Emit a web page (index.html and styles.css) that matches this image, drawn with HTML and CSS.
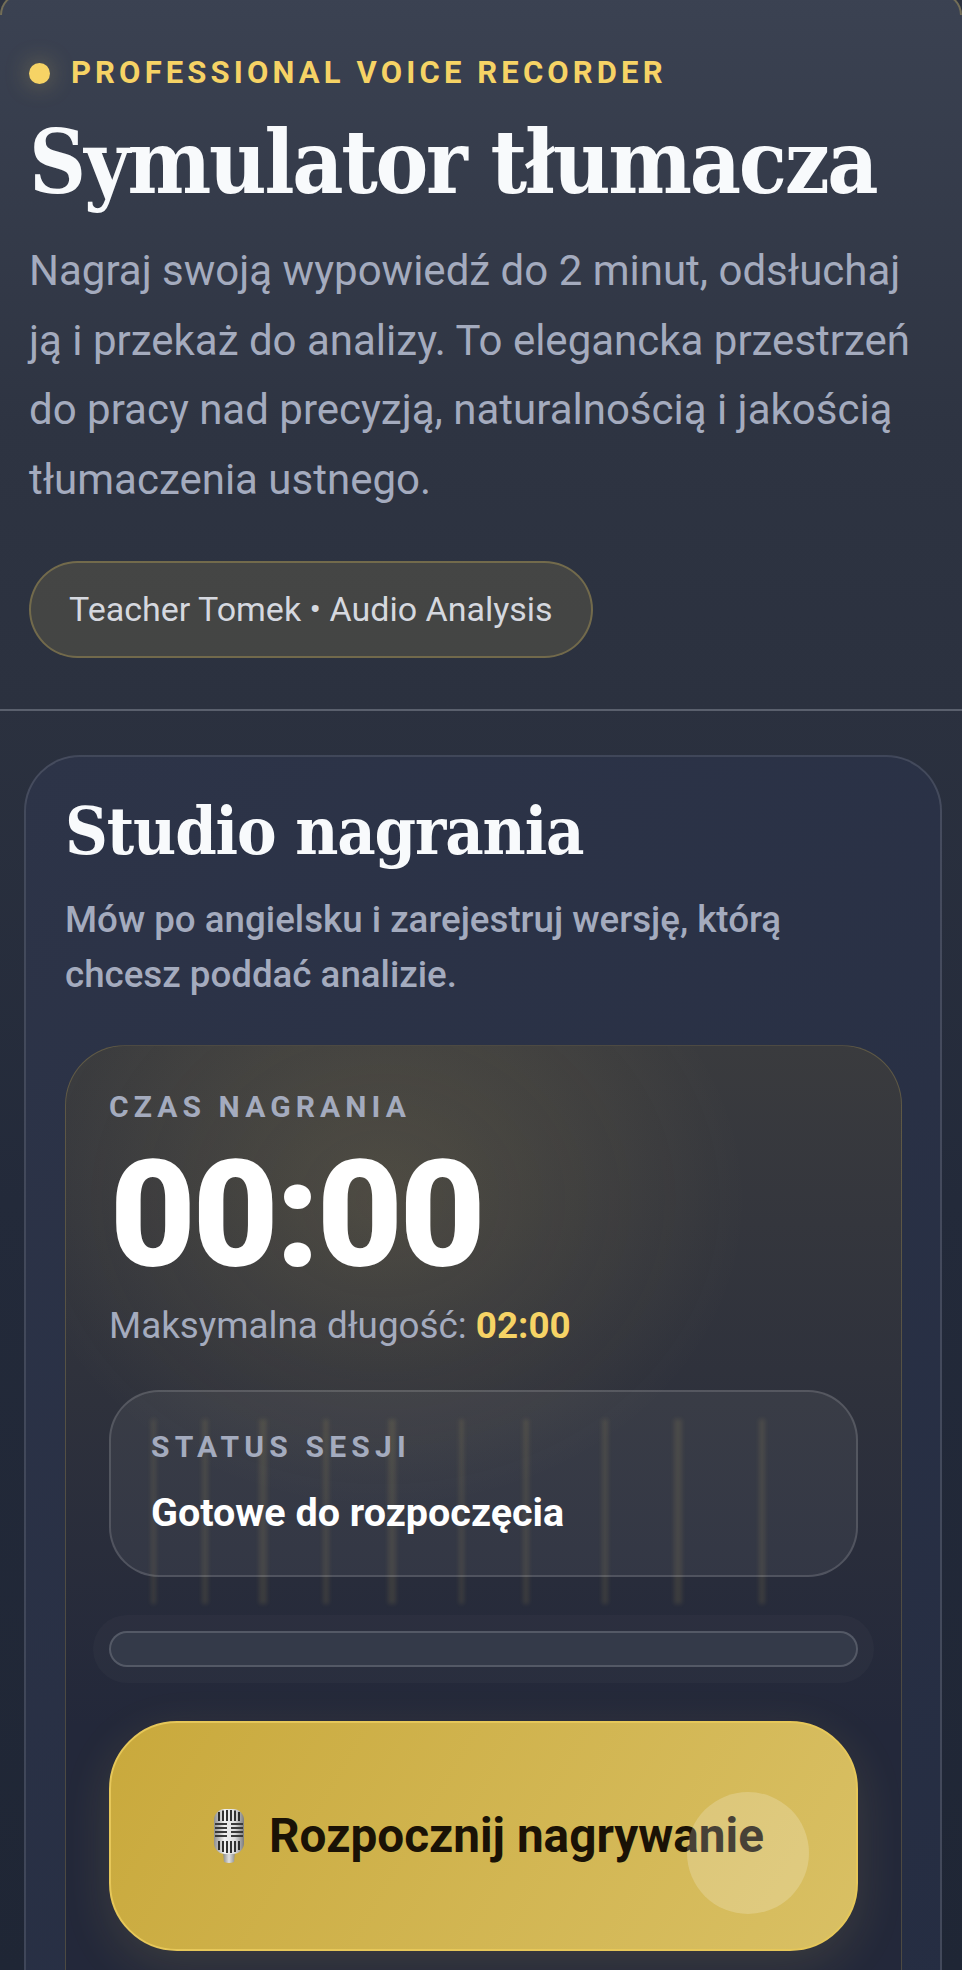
FILE: index.html
```html
<!DOCTYPE html>
<html lang="pl">
<head>
<meta charset="utf-8">
<title>Symulator tłumacza</title>
<link rel="stylesheet" href="styles.css">
</head>
<body>
<div class="shell">
  <header class="hero">
    <div class="eyebrow"><span class="dot"></span>PROFESSIONAL VOICE RECORDER</div>
    <h1>Symulator tłumacza</h1>
    <p class="lead">Nagraj swoją wypowiedź do 2 minut, odsłuchaj ją i przekaż do analizy. To elegancka przestrzeń do pracy nad precyzją, naturalnością i jakością tłumaczenia ustnego.</p>
    <div class="pill">Teacher Tomek • Audio Analysis</div>
  </header>
  <main class="content">
    <section class="card">
      <h2>Studio nagrania</h2>
      <p class="sub">Mów po angielsku i zarejestruj wersję, którą chcesz poddać analizie.</p>
      <div class="panel">
        <div class="label">CZAS NAGRANIA</div>
        <div class="timer">00:00</div>
        <div class="max">Maksymalna długość: <strong>02:00</strong></div>
        <div class="stage">
          <div class="wave">
            <i class="b1"></i><i class="b2"></i><i class="b3"></i><i class="b4"></i><i class="b5"></i><i class="b6"></i><i class="b7"></i><i class="b8"></i><i class="b9"></i><i class="b10"></i>
          </div>
          <div class="status">
            <div class="label small">STATUS SESJI</div>
            <div class="status-text">Gotowe do rozpoczęcia</div>
          </div>
        </div>
        <div class="track"></div>
        <button class="record" type="button">
          <svg class="mic" viewBox="0 0 32 56" aria-hidden="true">
            <defs>
              <linearGradient id="body" x1="0" x2="1" y1="0" y2="0">
                <stop offset="0" stop-color="#8f8f8f"/><stop offset=".35" stop-color="#f2f2f2"/><stop offset=".7" stop-color="#dcdcdc"/><stop offset="1" stop-color="#7d7d7d"/>
              </linearGradient>
              <linearGradient id="stem" x1="0" x2="1" y1="0" y2="0">
                <stop offset="0" stop-color="#8a8a8a"/><stop offset=".5" stop-color="#e0e0e0"/><stop offset="1" stop-color="#8f8f8f"/>
              </linearGradient>
            </defs>
            <path d="M10 44h12l-1 10q-5 2-10 0z" fill="url(#stem)"/>
            <rect x="1" y="1" width="30" height="45" rx="11" fill="url(#body)"/>
            <path d="M6 4v9M10 2.500v10.500M14 2v11M18 2v11M22 2.500v10.500M26 4v9M6 33v9M10 33v11M14 33v12M18 33v12M22 33v11M26 33v9" stroke="#1c1c1c" stroke-width="1.800" fill="none"/>
            <path d="M2 16h28M2 20h28M2 24h28M2 28h28" stroke="#3a3a3a" stroke-width="1.800" fill="none"/>
            <rect x="14" y="14" width="4" height="17" fill="#e8e8e8"/>
          </svg>
          <span>Rozpocznij nagrywanie</span>
          <span class="ripple"></span>
        </button>
      </div>
    </section>
  </main>
</div>
</body>
</html>
```
FILE: styles.css
```css
* { box-sizing: border-box; }
html, body { margin: 0; padding: 0; height: 1970px; overflow: hidden; background: #1e2533; }
body { font-family: Roboto, "Noto Sans", sans-serif; }
.shell {
  height: 1970px;
  overflow: hidden;
  background: linear-gradient(180deg, #2b313f 700px, #232a3a 1200px, #1f2635 1970px);
}
.hero {
  position: relative;
  margin-top: -7px;
  padding: 60px 29px 0;
  height: 718px;
  border-bottom: 2px solid rgba(255, 255, 255, .16);
  border-radius: 22px 22px 0 0;
  background: linear-gradient(180deg, #3b4252 0, #2e3442 60%, #2b313f 100%);
}
.hero::before {
  content: "";
  position: absolute;
  left: 0;
  right: 0;
  top: 0;
  height: 20px;
  border: 2px solid rgba(246, 211, 101, .3);
  border-bottom: 0;
  border-radius: 22px 22px 0 0;
}
.eyebrow {
  display: flex;
  align-items: center;
  gap: 21px;
  color: #f6d365;
  font-size: 31px;
  font-weight: 700;
  letter-spacing: 4.140px;
  line-height: 40px;
}
.dot {
  width: 21px;
  height: 21px;
  border-radius: 50%;
  background: #f6d365;
  box-shadow: 0 0 24px rgba(246, 211, 101, .35);
}
h1 {
  margin: 17px 0 0;
  font-family: "DejaVu Serif Condensed", "DejaVu Serif", serif;
  font-weight: 700;
  font-size: 88px;
  line-height: 104px;
  color: #f8fafc;
  letter-spacing: -2.300px;
  white-space: nowrap;
}
.lead {
  margin: 22px 0 0;
  font-size: 42px;
  line-height: 69.500px;
  color: #a4abbe;
}
.pill {
  display: inline-block;
  margin-top: 47px;
  padding: 0 38px;
  height: 97px;
  line-height: 93px;
  border-radius: 49px;
  border: 2px solid rgba(246, 211, 101, .26);
  background: rgba(246, 211, 101, .12);
  color: #d5d8df;
  font-size: 34px;
}
.content { padding: 44px 20px 0 24px; }
.card {
  padding: 36px 38px 0 39px;
  height: 1300px;
  border: 2px solid rgba(255, 255, 255, .12);
  border-radius: 56px;
  background: linear-gradient(145deg, #2d3448, #252d42);
}
h2 {
  margin: 0;
  font-family: "DejaVu Serif Condensed", "DejaVu Serif", serif;
  font-weight: 700;
  font-size: 66px;
  line-height: 76px;
  letter-spacing: -1.100px;
  color: #f8fafc;
}
.sub {
  margin: 23px 0 0;
  max-width: 780px;
  font-size: 36.700px;
  font-weight: 500;
  line-height: 55px;
  color: #a4abbe;
}
.panel {
  margin-top: 43px;
  padding: 41px 43px 0;
  height: 1100px;
  border: 1.500px solid rgba(246, 211, 101, .2);
  border-radius: 60px;
  background:
    radial-gradient(ellipse 520px 440px at 38% 14%, rgba(246, 211, 101, .13), transparent 70%),
    linear-gradient(180deg, #3a3b3e, #23283a 680px);
}
.label {
  color: #a4abbe;
  font-size: 30px;
  font-weight: 700;
  letter-spacing: 5.100px;
  line-height: 40px;
}
.timer {
  margin-top: 14px;
  padding-left: 1px;
  font-size: 148px;
  font-weight: 900;
  line-height: 150px;
  color: #fff;
  letter-spacing: -3px;
}
.max {
  margin-top: 10px;
  font-size: 36.800px;
  line-height: 50px;
  color: #a4abbe;
}
.max strong { color: #f6d365; font-weight: 700; }
.stage { position: relative; margin-top: 39px; height: 187px; }
.wave {
  position: absolute;
  left: 42px;
  top: 29px;
  height: 185px;
  display: grid;
  grid-template-columns: 51px 57px 64px 65px 71px 64px 79px 72px 85px 20px;
  align-items: stretch;
}
.wave i {
  display: block;
  justify-self: start;
  width: 6px;
  background: rgba(246, 211, 101, .1);
  filter: blur(2px);
}
.wave .b3, .wave .b5, .wave .b9 { width: 8px; }
.wave .b1, .wave .b6 { width: 5px; }
.status {
  position: relative;
  height: 187px;
  padding: 36px 40px 0;
  border: 2px solid rgba(255, 255, 255, .14);
  border-radius: 50px;
  background: rgba(255, 255, 255, .055);
}
.label.small { letter-spacing: 5.200px; line-height: 38px; }
.status-text {
  margin-top: 21px;
  font-size: 39.500px;
  font-weight: 700;
  line-height: 52px;
  color: #fff;
}
.track {
  margin-top: 54px;
  height: 36px;
  border: 2px solid rgba(255, 255, 255, .16);
  border-radius: 18px;
  background: #343a49;
  box-shadow: 0 0 0 16px rgba(255, 255, 255, .022);
}
.record {
  position: relative;
  overflow: hidden;
  display: flex;
  align-items: center;
  justify-content: center;
  gap: 24px;
  width: 100%;
  height: 230px;
  margin-top: 54px;
  padding: 0 0 0 10px;
  border: 2px solid #e6c759;
  border-radius: 68px;
  background: linear-gradient(120deg, #c9a93c, #d9c064);
  box-shadow: 0 14px 50px rgba(246, 211, 101, .12);
  font-family: inherit;
  font-size: 47.700px;
  font-weight: 700;
  color: #1a1206;
}
.mic { width: 32px; height: 56px; flex: none; }
.ripple {
  position: absolute;
  left: 576px;
  top: 69px;
  width: 122px;
  height: 122px;
  border-radius: 50%;
  background: rgba(255, 255, 255, .2);
}
```
